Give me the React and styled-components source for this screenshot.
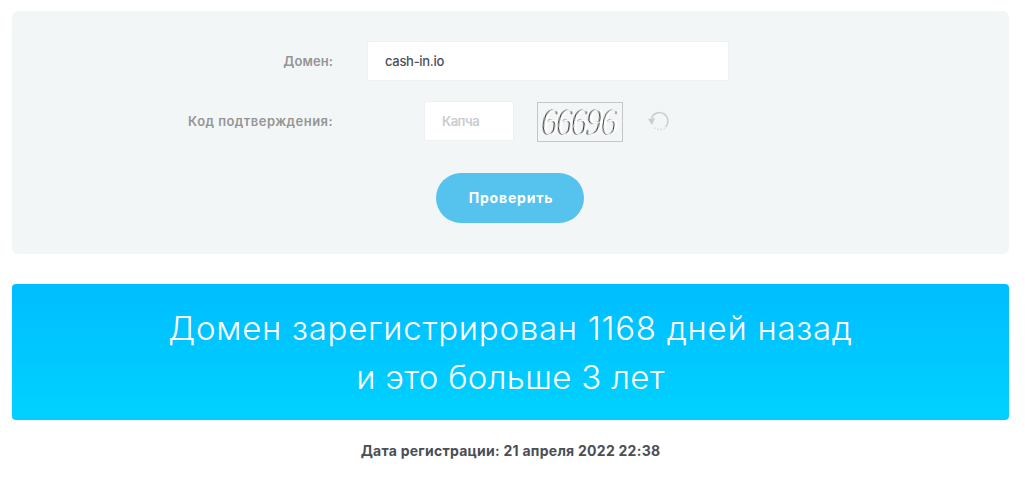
import React from 'react';
import styled, { createGlobalStyle } from 'styled-components';

const GlobalStyle = createGlobalStyle`
	html, body {
		margin: 0;
		padding: 0;
		background: #fff;
		font-family: Inter, "Open Sans", sans-serif;
	}
`

const Page = styled.div`
	display: flex;
	flex-direction: column;
	padding: 11px 16px 0 12px;
`

const Panel = styled.form`
	display: grid;
	grid-template-columns: 321px 362px 1fr;
	grid-template-rows: 40px 40px auto;
	column-gap: 34px;
	row-gap: 20px;
	padding: 30px 0 31px;
	background: #f3f6f7;
	border-radius: 6px;
`

const Label = styled.label`
	grid-column: 1;
	align-self: center;
	text-align: right;
	font-size: 13px;
	font-weight: 600;
	letter-spacing: ${p => p.$spacing};
	color: #959595;
`

const TextInput = styled.input`
	box-sizing: border-box;
	width: ${p => p.$width};
	height: 40px;
	padding: 0 0 0 17px;
	border: 1px solid #eef0f1;
	border-radius: 2px;
	background: #fff;
	outline: none;
	font-family: inherit;
	font-size: 13px;
	font-weight: ${p => p.$weight};
	letter-spacing: ${p => p.$spacing};
	color: #4a4f5a;

	&::placeholder {
		color: #c9cdd1;
		opacity: 1;
	}
`

const CaptchaRow = styled.div`
	display: flex;
	align-items: center;
	margin-left: 57px;
`

const CaptchaImage = styled.div`
	box-sizing: border-box;
	display: flex;
	align-items: center;
	justify-content: center;
	width: 86px;
	height: 40px;
	margin: 1px 23px 0 23px;
	border: 1px solid #c4c6c7;
	background: #f3f6f7;
`

const CaptchaCode = styled.span`
	display: block;
	font-family: "Liberation Serif", serif;
	font-size: 33px;
	line-height: 30px;
	letter-spacing: -1.6px;
	color: #fff;
	text-shadow: -1.2px 0 0 #333;
	transform: skewX(-9deg) scaleY(1.2);
	will-change: transform;
`

const RefreshIcon = styled.svg`
	display: block;
	width: 24px;
	height: 24px;
`

const Actions = styled.div`
	grid-column: 1 / -1;
	display: flex;
	justify-content: center;
	margin-top: 12px;
	padding-right: 2px;
`

const CheckButton = styled.button`
	width: 148px;
	height: 50px;
	padding: 0 0 1px 3px;
	border: 0;
	border-radius: 25px;
	background: #55c3ed;
	font-family: inherit;
	font-size: 14px;
	font-weight: 700;
	letter-spacing: 0.8px;
	color: #fff;
`

const Banner = styled.div`
	box-sizing: border-box;
	height: 136px;
	margin-top: 30px;
	padding-top: 20px;
	border-radius: 4px;
	background: linear-gradient(to bottom, #00bdff, #00d2ff);
	text-align: center;
	font-size: 33px;
	font-weight: 300;
	line-height: 49px;
	color: #fff;
`

const BannerLine = styled.div`
	letter-spacing: ${p => p.$spacing};
`

const RegDate = styled.p`
	margin: 22px 0 0;
	text-align: center;
	font-size: 14px;
	font-weight: 700;
	line-height: 18px;
	letter-spacing: 0.26px;
	color: #4a4f55;
`

export default function App() {
	return (
		<Page>
			<GlobalStyle />
			<Panel onSubmit={e => e.preventDefault()}>
				<Label $spacing="0.1px">Домен:</Label>
				<TextInput $width="362px" $weight={500} $spacing="-0.3px" defaultValue="cash-in.io" />

				<Label $spacing="0.45px">Код подтверждения:</Label>
				<CaptchaRow>
					<TextInput $width="90px" $weight={600} $spacing="-0.5px" placeholder="Капча" />
					<CaptchaImage>
						<CaptchaCode>66696</CaptchaCode>
					</CaptchaImage>
					<RefreshIcon viewBox="0 0 24 24" fill="none" stroke="#c6cfd3" strokeWidth="1.5">
						<path d="M5.5 9A8.5 8.5 0 1 1 19.5 18" />
						<path d="M18.5 19A8.5 8.5 0 0 1 7 17.5" strokeDasharray="1 2.2" />
						<path d="M2 10 9 9 6 16Z" fill="#c6cfd3" stroke="none" />
					</RefreshIcon>
				</CaptchaRow>

				<Actions>
					<CheckButton type="submit">Проверить</CheckButton>
				</Actions>
			</Panel>

			<Banner>
				<BannerLine $spacing="0.73px">Домен зарегистрирован 1168 дней назад</BannerLine>
				<BannerLine $spacing="0.34px">и это больше 3 лет</BannerLine>
			</Banner>

			<RegDate>Дата регистрации: 21 апреля 2022 22:38</RegDate>
		</Page>
	);
}
